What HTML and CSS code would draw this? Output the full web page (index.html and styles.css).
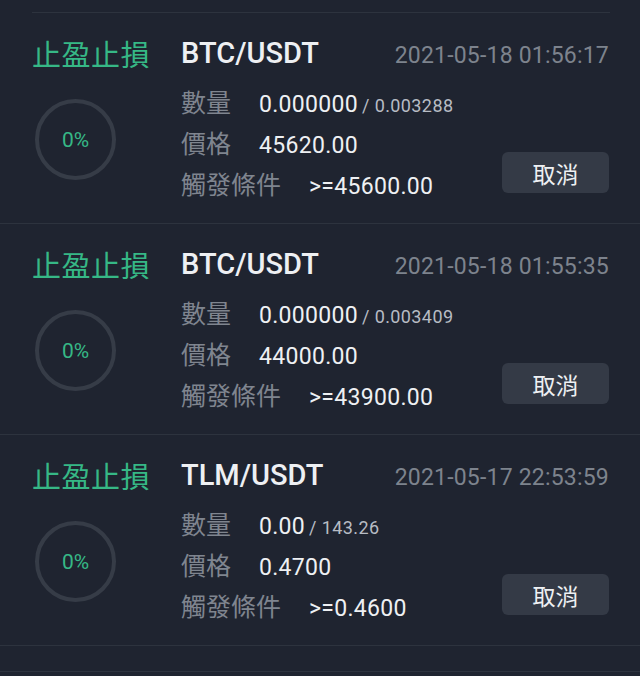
FILE: index.html
```
<!DOCTYPE html>
<html lang="zh-Hant">
<head>
<meta charset="utf-8">
<link rel="stylesheet" href="styles.css">
</head>
<body>
<div class="page">
  <div class="top-line"></div>

  <div class="card">
    <div class="left">
      <div class="type">止盈止損</div>
      <div class="ring">0%</div>
    </div>
    <div class="right">
      <div class="head">
        <span class="pair">BTC/USDT</span>
        <span class="date">2021-05-18 01:56:17</span>
      </div>
      <div class="body">
        <div class="rows">
          <div class="row"><span class="label">數量</span><span class="val">0.000000</span><span class="sub">/ 0.003288</span></div>
          <div class="row"><span class="label">價格</span><span class="val">45620.00</span></div>
          <div class="row"><span class="label">觸發條件</span><span class="val">&gt;=45600.00</span></div>
        </div>
        <button class="cancel">取消</button>
      </div>
    </div>
  </div>

  <div class="card">
    <div class="left">
      <div class="type">止盈止損</div>
      <div class="ring">0%</div>
    </div>
    <div class="right">
      <div class="head">
        <span class="pair">BTC/USDT</span>
        <span class="date">2021-05-18 01:55:35</span>
      </div>
      <div class="body">
        <div class="rows">
          <div class="row"><span class="label">數量</span><span class="val">0.000000</span><span class="sub">/ 0.003409</span></div>
          <div class="row"><span class="label">價格</span><span class="val">44000.00</span></div>
          <div class="row"><span class="label">觸發條件</span><span class="val">&gt;=43900.00</span></div>
        </div>
        <button class="cancel">取消</button>
      </div>
    </div>
  </div>

  <div class="card">
    <div class="left">
      <div class="type">止盈止損</div>
      <div class="ring">0%</div>
    </div>
    <div class="right">
      <div class="head">
        <span class="pair">TLM/USDT</span>
        <span class="date">2021-05-17 22:53:59</span>
      </div>
      <div class="body">
        <div class="rows">
          <div class="row"><span class="label">數量</span><span class="val">0.00</span><span class="sub">/ 143.26</span></div>
          <div class="row"><span class="label">價格</span><span class="val">0.4700</span></div>
          <div class="row"><span class="label">觸發條件</span><span class="val">&gt;=0.4600</span></div>
        </div>
        <button class="cancel">取消</button>
      </div>
    </div>
  </div>

  <div class="tail"></div>
</div>
</body>
</html>
```

FILE: styles.css
```
html, body {
  margin: 0;
  padding: 0;
  background: #1f2430;
}
.page {
  width: 640px;
  height: 676px;
  overflow: hidden;
  background: #1f2430;
  font-family: Roboto, "Noto Sans CJK TC", sans-serif;
  padding-top: 12px;
  box-sizing: border-box;
}
.top-line {
  height: 1px;
  margin: 0 30px 0 32px;
  background: #2d333e;
}
.card {
  display: flex;
  padding: 20px 31px 17px 32px;
  box-sizing: border-box;
  border-bottom: 1px solid #2d333e;
  height: 211px;
}
.left {
  width: 149px;
  flex: none;
  display: flex;
  flex-direction: column;
}
.type {
  font-family: "Noto Sans CJK TC", sans-serif;
  font-size: 29px;
  line-height: 40px;
  color: #36b886;
  letter-spacing: 0.5px;
  white-space: nowrap;
}
.ring {
  margin: 26px 0 0 3px;
  width: 81px;
  height: 81px;
  box-sizing: border-box;
  border: 4px solid #363c47;
  border-radius: 50%;
  display: flex;
  align-items: center;
  justify-content: center;
  color: #36b886;
  font-size: 21px;
}
.right {
  flex: 1;
  display: flex;
  flex-direction: column;
}
.head {
  display: flex;
  justify-content: space-between;
  align-items: center;
  height: 40px;
}
.pair {
  font-size: 29px;
  font-weight: 500;
  color: #eef0f3;
}
.date {
  font-size: 23px;
  letter-spacing: 0.2px;
  color: #7d838d;
  padding-top: 4px;
}
.body {
  display: flex;
  justify-content: space-between;
  align-items: flex-end;
  margin-top: 8px;
}
.rows {
  display: flex;
  flex-direction: column;
}
.row {
  display: flex;
  align-items: baseline;
  height: 41px;
  line-height: 41px;
  white-space: nowrap;
}
.label {
  font-family: "Noto Sans CJK TC", sans-serif;
  font-size: 25px;
  color: #7f858f;
  margin-right: 28px;
}
.val {
  font-size: 23px;
  letter-spacing: 0.3px;
  color: #eef0f3;
}
.sub {
  font-size: 18px;
  letter-spacing: 0.4px;
  color: #b7bcc4;
  margin-left: 4px;
}
.cancel {
  width: 107px;
  height: 41px;
  margin-bottom: 11px;
  border: none;
  border-radius: 6px;
  background: #343a46;
  color: #eef0f3;
  font-family: "Noto Sans CJK TC", sans-serif;
  font-size: 23px;
  padding: 0;
}
.tail {
  height: 25px;
  border-bottom: 1px solid #2d333e;
}
```
